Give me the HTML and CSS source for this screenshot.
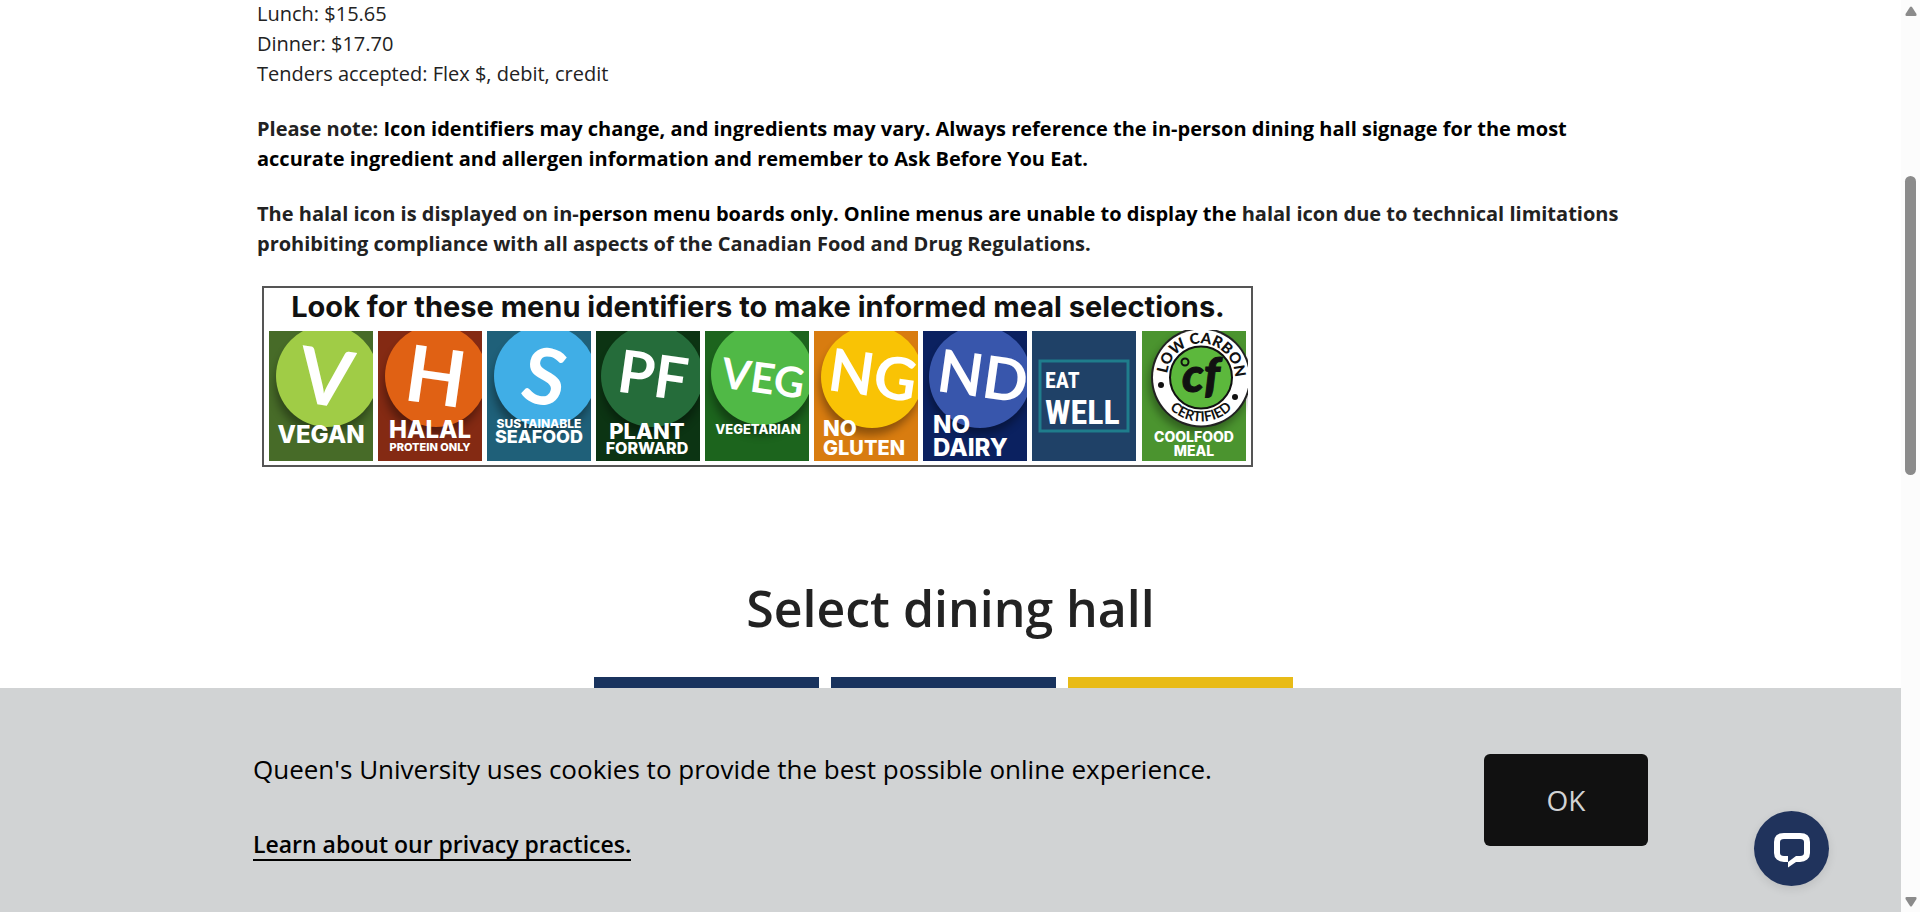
FILE: index.html
```html
<!DOCTYPE html>
<html lang="en">
<head>
<meta charset="utf-8">
<title>Dining hall menus</title>
<link rel="stylesheet" href="styles.css">
</head>
<body>
<main class="page">
  <section class="intro">
    <p>Lunch: $15.65<br>Dinner: $17.70<br>Tenders accepted: Flex $, debit, credit</p>
    <p><strong>Please note: <span class="ink">Icon identifiers may change, and ingredients may vary. Always reference the in-person dining hall signage for the most accurate ingredient and allergen information and remember to Ask Before You Eat.</span></strong></p>
    <p><strong>The halal icon is displayed on in-<span class="ink">person menu boards only. Online menus are unable to display the</span> halal icon due to technical limitations prohibiting compliance with all aspects of the Canadian Food and Drug Regulations.</strong></p>
    <svg class="legend" viewBox="0 0 992 182">
      <defs>
        <clipPath id="tile"><rect width="104" height="130"/></clipPath>
        <clipPath id="tile-wide"><rect y="-1" width="106" height="131"/></clipPath>
        <filter id="soft" x="-20%" y="-20%" width="140%" height="140%"><feGaussianBlur stdDeviation="4"/></filter>
        <path id="arc-top" d="M25 46.500a34 34 0 0 1 68 0a34 34 0 0 1 -10 24"/>
        <path id="arc-bottom" d="M15 46.500a44 44 0 0 0 88 0"/>
      </defs>
      <rect class="frame" x="1" y="1" width="989" height="179"/>
      <text class="legend-title" x="496" y="31">Look for these menu identifiers to make informed meal selections.</text>

      <g transform="translate(7 45)" clip-path="url(#tile)">
        <rect width="104" height="130" fill="#476b28"/>
        <circle class="shade" cx="56" cy="54" r="50"/>
        <circle cx="58" cy="45" r="51" fill="#a0cc46"/>
        <text class="mark mark-l" transform="translate(53 74) rotate(8)">V</text>
        <text class="label s24" x="52" y="112">VEGAN</text>
      </g>
      <g transform="translate(116 45)" clip-path="url(#tile)">
        <rect width="104" height="130" fill="#842a13"/>
        <circle class="shade" cx="56" cy="54" r="50"/>
        <circle cx="58" cy="45" r="51" fill="#e06114"/>
        <text class="mark mark-l" transform="translate(54 73) rotate(8)">H</text>
        <text class="label s24" x="52" y="107">HALAL</text>
        <text class="label s11" x="52" y="120">PROTEIN ONLY</text>
      </g>
      <g transform="translate(225 45)" clip-path="url(#tile)">
        <rect width="104" height="130" fill="#1f6079"/>
        <circle class="shade" cx="56" cy="54" r="50"/>
        <circle cx="58" cy="45" r="51" fill="#40aee6"/>
        <text class="mark mark-l" transform="translate(52 73) rotate(12)">S</text>
        <text class="label s12" x="52" y="97">SUSTAINABLE</text>
        <text class="label s18" x="52" y="112">SEAFOOD</text>
      </g>
      <g transform="translate(334 45)" clip-path="url(#tile)">
        <rect width="104" height="130" fill="#0c3413"/>
        <circle class="shade" cx="56" cy="54" r="50"/>
        <circle cx="56" cy="45" r="51" fill="#256c3a"/>
        <text class="mark mark-m" transform="translate(54 65) rotate(8)">PF</text>
        <text class="label s22" x="51" y="108">PLANT</text>
        <text class="label s16" x="51" y="123">FORWARD</text>
      </g>
      <g transform="translate(443 45)" clip-path="url(#tile)">
        <rect width="104" height="130" fill="#1c641d"/>
        <circle class="shade" cx="56" cy="54" r="50"/>
        <circle cx="57" cy="43" r="51" fill="#50b946"/>
        <text class="mark mark-s" transform="translate(56 62) rotate(8)">VEG</text>
        <text class="label s13" x="53" y="103">VEGETARIAN</text>
      </g>
      <g transform="translate(552 45)" clip-path="url(#tile)">
        <rect width="104" height="130" fill="#d87c10"/>
        <circle class="shade" cx="56" cy="54" r="50"/>
        <circle cx="58" cy="46" r="51" fill="#f9c305"/>
        <text class="mark mark-m" transform="translate(56 65) rotate(8)">NG</text>
        <text class="label start s22" x="9" y="105">NO</text>
        <text class="label start s20" x="9" y="124">GLUTEN</text>
      </g>
      <g transform="translate(661 45)" clip-path="url(#tile)">
        <rect width="104" height="130" fill="#0b2160"/>
        <circle class="shade" cx="56" cy="54" r="50"/>
        <circle cx="57" cy="46" r="51" fill="#3856ac"/>
        <text class="mark mark-m" transform="translate(57 66) rotate(8)">ND</text>
        <text class="label start s24" x="10" y="102">NO</text>
        <text class="label start s24" x="10" y="125">DAIRY</text>
      </g>
      <g transform="translate(770 45)">
        <rect width="104" height="130" fill="#1f4167"/>
        <rect x="8" y="30" width="88" height="70" fill="none" stroke="#1f7d8c" stroke-width="3"/>
        <text class="narrow eat" x="13" y="57">EAT</text>
        <text class="narrow well" x="13" y="93">WELL</text>
      </g>
      <g transform="translate(880 45)" clip-path="url(#tile-wide)">
        <rect width="104" height="130" fill="#4b942f"/>
        <circle class="shade" cx="57" cy="52" r="50"/>
        <circle cx="59" cy="46.500" r="50" fill="#222"/>
        <circle cx="59" cy="46.500" r="48" fill="#fff"/>
        <circle cx="59" cy="46.500" r="31" fill="#5cb83c" stroke="#111" stroke-width="2"/>
        <text class="ring-top"><textPath href="#arc-top" startOffset="4">LOW CARBON</textPath></text>
        <text class="ring-bottom"><textPath href="#arc-bottom" startOffset="50%">CERTIFIED</textPath></text>
        <circle cx="19" cy="54" r="3" fill="#111"/>
        <circle cx="93" cy="66" r="3" fill="#111"/>
        <circle cx="43" cy="31" r="3.500" fill="none" stroke="#111" stroke-width="2"/>
        <text class="cf" x="59" y="61">cf</text>
        <text class="label s14" x="52" y="111">COOLFOOD</text>
        <text class="label s14" x="52" y="125">MEAL</text>
      </g>
    </svg>
  </section>

  <section class="halls">
    <h2>Select dining hall</h2>
    <div class="hall-tabs">
      <div class="tab"></div>
      <div class="tab"></div>
      <div class="tab tab-active"></div>
    </div>
  </section>
</main>

<div class="cookies">
  <div class="cookies-inner">
    <div class="cookies-copy">
      <p>Queen's University uses cookies to provide the best possible online experience.</p>
      <a href="#privacy">Learn about our privacy practices.</a>
    </div>
    <button class="ok" type="button">OK</button>
  </div>
</div>

<button class="chat" type="button">
  <svg viewBox="0 0 75 75" fill="none">
    <path d="M42 48H46C50.500 48 53 45.500 53 42V31C53 27 50.500 25 46 25H30C25.500 25 23 27 23 31V42C23 45.500 25.500 48 30 48H34" stroke="#fff" stroke-width="6"/>
    <path d="M34 45V56.500L42 51V45L34 51z" fill="#fff"/>
  </svg>
</button>

<div class="scrollbar">
  <svg viewBox="0 0 12 10"><path d="M5 1Q6 0 7 1L11.500 8Q12 10 10.500 10H1.500Q0 10 .5 8z"/></svg>
  <div class="track"><div class="thumb"></div></div>
  <svg viewBox="0 0 12 10"><path d="M5 9Q6 10 7 9L11.500 2Q12 0 10.500 0H1.500Q0 0 .5 2z"/></svg>
</div>
</body>
</html>
```

FILE: styles.css
```css
* { box-sizing: border-box; }

body {
  margin: 0;
  height: 100vh;
  overflow: hidden;
  padding-right: 19px;
  background: #fff;
  color: #222;
  font: 20px/30px "Open Sans", sans-serif;
}

.page {
  max-width: 1387px;
  margin: -1px auto 0;
}

.intro p { margin: 0 0 25px; }
.intro strong { font-weight: 700; }
.ink { color: #000; }

.legend {
  display: block;
  width: 992px;
  max-width: 100%;
  margin: 27px 0 0 5px;
}
.frame { fill: #fff; stroke: #555; stroke-width: 2; }
.legend-title {
  font: 700 29px Inter, sans-serif;
  text-anchor: middle;
  fill: #111;
}
.shade { fill: #000; opacity: .35; filter: url(#soft); }
.mark { font-family: Lato, sans-serif; font-weight: 700; text-anchor: middle; fill: #fff; }
.mark-l { font-size: 78px; }
.mark-m { font-size: 59px; }
.mark-s { font-size: 42px; }
.label { font-family: Inter, sans-serif; font-weight: 800; text-anchor: middle; fill: #fff; }
.start { text-anchor: start; }
.s24 { font-size: 24px; }
.s22 { font-size: 22px; }
.s20 { font-size: 20px; }
.s18 { font-size: 18px; }
.s16 { font-size: 16px; }
.s14 { font-size: 14px; }
.s13 { font-size: 13px; }
.s12 { font-size: 12px; }
.s11 { font-size: 11px; }
.narrow { font-family: "Roboto Condensed", Roboto, sans-serif; font-weight: 700; fill: #fff; }
.eat { font-size: 22px; }
.well { font-size: 34px; }
.ring-top { font: 900 15px Lato, sans-serif; fill: #111; }
.ring-bottom { font: 700 14px Lato, sans-serif; text-anchor: middle; fill: #111; }
.cf { font: italic 900 48px Lato, sans-serif; text-anchor: middle; fill: #111; stroke: #111; stroke-width: 1; }

.halls h2 {
  margin: 105px 0 34px;
  font-size: 50px;
  line-height: 70px;
  font-weight: 600;
  text-align: center;
}
.hall-tabs {
  display: flex;
  justify-content: center;
  gap: 12px;
  padding-right: 14px;
}
.tab { width: 225px; height: 60px; background: #19335e; }
.tab-active { background: #e8bb17; }

.cookies {
  position: fixed;
  left: 0;
  right: 19px;
  bottom: 0;
  background: #d1d3d4;
  color: #000;
}
.cookies-inner {
  display: flex;
  justify-content: space-between;
  align-items: center;
  max-width: 1395px;
  min-height: 224px;
  margin: 0 auto;
}
.cookies-copy { padding-top: 10px; }
.cookies-copy p { margin: 0 0 40px; font-size: 26px; line-height: 40px; }
.cookies-copy a {
  display: inline-block;
  border-bottom: 2px solid #000;
  color: #000;
  font-size: 23px;
  line-height: 30px;
  font-weight: 600;
  text-decoration: none;
}
.ok {
  width: 164px;
  height: 92px;
  border: 0;
  border-radius: 6px;
  background: #111;
  color: #d1d3d4;
  font: 28px "Open Sans", sans-serif;
}

.chat {
  position: fixed;
  right: 91px;
  bottom: 26px;
  width: 75px;
  height: 75px;
  padding: 0;
  border: 0;
  border-radius: 50%;
  background: #20335c;
  box-shadow: 0 3px 10px rgba(0, 0, 0, .1);
}
.chat svg { display: block; }

.scrollbar {
  position: fixed;
  top: 0;
  right: 0;
  bottom: 0;
  display: flex;
  flex-direction: column;
  align-items: center;
  width: 19px;
  padding: 6px 0 5px;
  background: #fcfcfc;
}
.scrollbar svg { width: 12px; height: 10px; fill: #8b8b8b; }
.track { flex: 1; padding-top: 160px; }
.thumb { width: 11px; height: 299px; border-radius: 6px; background: #8b8b8b; }
```
